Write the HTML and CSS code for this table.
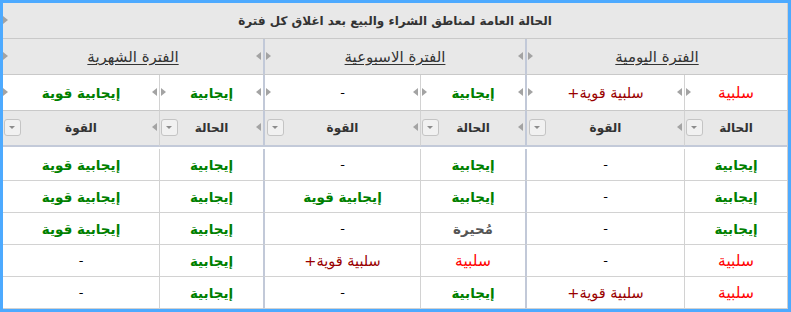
FILE: index.html
```html
<!DOCTYPE html>
<html lang="ar" dir="rtl">
<head>
<meta charset="utf-8">
<title>الحالة العامة لمناطق الشراء والبيع</title>
<link rel="stylesheet" href="styles.css">
</head>
<body>
<div class="frame">
  <div class="grid">
    <div class="cell title span6"><span class="title-text">الحالة العامة لمناطق الشراء والبيع بعد اغلاق كل فترة</span><i class="tri tri-r"></i></div>

    <div class="cell grp span2 sep"><span class="grp-text">الفترة اليومية</span><i class="tri tri-r"></i></div>
    <div class="cell grp span2 sep"><span class="grp-text">الفترة الاسبوعية</span><i class="tri tri-l"></i><i class="tri tri-r"></i></div>
    <div class="cell grp span2 last"><span class="grp-text">الفترة الشهرية</span><i class="tri tri-l"></i><i class="tri tri-r"></i></div>

    <div class="cell val"><span class="neg">سلبية</span><i class="tri tri-r"></i></div>
    <div class="cell val sep"><span class="sneg">سلبية قوية+</span><i class="tri tri-l"></i><i class="tri tri-r"></i></div>
    <div class="cell val"><span class="pos">إيجابية</span><i class="tri tri-l"></i><i class="tri tri-r"></i></div>
    <div class="cell val sep"><span class="dash">-</span><i class="tri tri-l"></i><i class="tri tri-r"></i></div>
    <div class="cell val"><span class="pos">إيجابية</span><i class="tri tri-l"></i><i class="tri tri-r"></i></div>
    <div class="cell val last"><span class="pos">إيجابية قوية</span><i class="tri tri-l"></i><i class="tri tri-r"></i></div>

    <div class="cell head">الحالة<i class="drop"></i></div>
    <div class="cell head sep">القوة<i class="tri tri-l"></i><i class="drop"></i></div>
    <div class="cell head">الحالة<i class="tri tri-l"></i><i class="drop"></i></div>
    <div class="cell head sep">القوة<i class="tri tri-l"></i><i class="drop"></i></div>
    <div class="cell head">الحالة<i class="tri tri-l"></i><i class="drop"></i></div>
    <div class="cell head last">القوة<i class="tri tri-l"></i><i class="drop"></i></div>

    <div class="spacer span6"></div>

    <div class="cell row"><span class="pos">إيجابية</span></div>
    <div class="cell row sep"><span class="dash">-</span></div>
    <div class="cell row"><span class="pos">إيجابية</span></div>
    <div class="cell row sep"><span class="dash">-</span></div>
    <div class="cell row"><span class="pos">إيجابية</span></div>
    <div class="cell row last"><span class="pos">إيجابية قوية</span></div>

    <div class="cell row"><span class="pos">إيجابية</span></div>
    <div class="cell row sep"><span class="dash">-</span></div>
    <div class="cell row"><span class="pos">إيجابية</span></div>
    <div class="cell row sep"><span class="pos">إيجابية قوية</span></div>
    <div class="cell row"><span class="pos">إيجابية</span></div>
    <div class="cell row last"><span class="pos">إيجابية قوية</span></div>

    <div class="cell row"><span class="pos">إيجابية</span></div>
    <div class="cell row sep"><span class="dash">-</span></div>
    <div class="cell row"><span class="mix">مُحيرة</span></div>
    <div class="cell row sep"><span class="dash">-</span></div>
    <div class="cell row"><span class="pos">إيجابية</span></div>
    <div class="cell row last"><span class="pos">إيجابية قوية</span></div>

    <div class="cell row"><span class="neg">سلبية</span></div>
    <div class="cell row sep"><span class="dash">-</span></div>
    <div class="cell row"><span class="neg">سلبية</span></div>
    <div class="cell row sep"><span class="sneg">سلبية قوية+</span></div>
    <div class="cell row"><span class="pos">إيجابية</span></div>
    <div class="cell row last"><span class="dash">-</span></div>

    <div class="cell row"><span class="neg">سلبية</span></div>
    <div class="cell row sep"><span class="sneg">سلبية قوية+</span></div>
    <div class="cell row"><span class="pos">إيجابية</span></div>
    <div class="cell row sep"><span class="dash">-</span></div>
    <div class="cell row"><span class="pos">إيجابية</span></div>
    <div class="cell row last"><span class="dash">-</span></div>
  </div>
</div>
</body>
</html>
```

FILE: styles.css
```css
html, body {
  margin: 0;
  padding: 0;
  background: #ffffff;
}

body {
  font-family: "DejaVu Sans", Tahoma, sans-serif;
  direction: rtl;
}

.frame {
  width: 791px;
  height: 312px;
  box-sizing: border-box;
  border: 3px solid #4daaff;
  overflow: hidden;
  background: #ffffff;
}

.grid {
  display: grid;
  grid-template-columns: 103px 159px 105px 157px 104px 156px;
  border-right: 1px solid #cfcfcf;
  direction: rtl;
}

.span6 { grid-column: span 6; }
.span2 { grid-column: span 2; }

.cell {
  position: relative;
  box-sizing: border-box;
  display: flex;
  align-items: center;
  justify-content: center;
  border-left: 1px solid #d2d2d2;
  white-space: nowrap;
}

.cell.sep {
  border-left: 2px solid #c2c9d8;
}

.cell.last {
  border-left: none;
}

/* title row */
.title {
  height: 36px;
  background: #e8e8e8;
  border-left: none;
  border-bottom: 1px solid #c9c9c9;
  padding-top: 1px;
}

.title-text {
  font-size: 12px;
  font-weight: bold;
  color: #333333;
}

/* group row */
.grp {
  height: 36px;
  background: #e8e8e8;
  border-bottom: 1px solid #c9c9c9;
  padding-top: 1px;
}

.grp-text {
  font-size: 15px;
  color: #333333;
  text-decoration: underline;
  text-underline-offset: 2px;
}

/* value row */
.val {
  height: 36px;
  background: #ffffff;
  border-bottom: 1px solid #c9c9c9;
}

/* column head row */
.head {
  height: 36px;
  background: #e8e8e8;
  border-bottom: 2px solid #c3cad9;
  font-size: 12px;
  font-weight: bold;
  color: #333333;
}

.spacer {
  height: 2px;
}

/* data rows */
.row {
  height: 32px;
  border-bottom: 1px solid #d2d2d2;
}

/* text colours */
.pos {
  color: #008000;
  font-weight: bold;
  font-size: 13.5px;
}

.neg {
  color: #ff0000;
  font-size: 15.5px;
}

.sneg {
  color: #990000;
  font-size: 14.5px;
}

.mix {
  color: #555555;
  font-weight: bold;
  font-size: 13.5px;
}

.dash {
  color: #000000;
  font-size: 13px;
}

/* splitter triangles */
.tri {
  position: absolute;
  top: 50%;
  width: 0;
  height: 0;
  margin-top: -5px;
  border-top: 4.5px solid transparent;
  border-bottom: 4.5px solid transparent;
}

.tri-l {
  right: 2px;
  border-right: 5px solid #a3a3a3;
}

.tri-r {
  left: 1px;
  border-left: 5px solid #a3a3a3;
}

.last .tri-r,
.title .tri-r {
  left: 0;
}

/* dropdown buttons */
.drop {
  position: absolute;
  left: 1px;
  top: 8px;
  width: 17px;
  height: 17px;
  box-sizing: border-box;
  border: 1px solid #c4c4c4;
  border-radius: 3px;
  background: #f1f1f1;
}

.drop::after {
  content: "";
  position: absolute;
  left: 4px;
  top: 6px;
  width: 0;
  height: 0;
  border-left: 3.5px solid transparent;
  border-right: 3.5px solid transparent;
  border-top: 3.5px solid #8c8c8c;
}

.head.sep .drop {
  left: 2px;
}
```
